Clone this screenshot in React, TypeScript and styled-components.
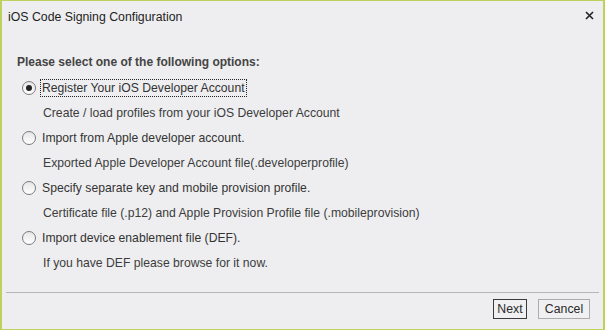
import React, { useState } from 'react';
import styled, { createGlobalStyle } from 'styled-components';

const GlobalStyle = createGlobalStyle`
  body {
    margin: 0;
    font-family: "Liberation Sans", Arial, sans-serif;
  }
`;

const Window = styled.div`
  width: 605px;
  height: 330px;
  box-sizing: border-box;
  border: 1px solid #bcd25c;
  border-width: 1px 2px 1px 2px;
  background: #eeeef0;
  display: flex;
  flex-direction: column;
  color: #333;
  font-size: 12px;
`;

const TitleBar = styled.div`
  height: 31px;
  display: flex;
  align-items: center;
  justify-content: space-between;
  padding: 0 8px 0 6px;
`;

const Title = styled.span`
  color: #1e1e1e;
  font-size: 12.3px;
`;

const CloseButton = styled.button`
  border: none;
  background: none;
  padding: 0;
  width: 12px;
  height: 12px;
  margin-top: -3px;
  display: flex;
  align-items: center;
  justify-content: center;
  cursor: pointer;
`;

const Body = styled.div`
  padding: 22px 0 0 15px;
  flex: 1;
`;

const Heading = styled.div`
  font-weight: bold;
  line-height: 16px;
  color: #444;
  margin-bottom: 5px;
`;

const OptionRow = styled.label`
  height: 25px;
  display: flex;
  align-items: center;
  padding-left: 5px;
  cursor: default;
`;

const Radio = styled.span<{ $checked: boolean }>`
  width: 12px;
  height: 12px;
  border: 1px solid #7a7a7a;
  border-radius: 50%;
  background: linear-gradient(#e6e6e6, #ffffff);
  display: flex;
  align-items: center;
  justify-content: center;
  margin-right: 4px;

  &::after {
    content: '';
    width: 6px;
    height: 6px;
    border-radius: 50%;
    background: ${(p) => (p.$checked ? '#222' : 'transparent')};
  }
`;

const OptionLabel = styled.span<{ $focused: boolean }>`
  padding: 1px 1px;
  line-height: 14px;
  font-size: 12.2px;
  border: 1px dotted ${(p) => (p.$focused ? '#222' : 'transparent')};
`;

const Description = styled.div`
  height: 25px;
  display: flex;
  align-items: center;
  padding-left: 26px;
  font-size: 12.2px;
  color: #3c3c3c;
`;

const Footer = styled.div`
  display: flex;
  flex-direction: column;
`;

const Separator = styled.div`
  height: 1px;
  background: #b6b6b6;
  margin: 0 4px 0 4px;
`;

const ButtonRow = styled.div`
  display: flex;
  justify-content: flex-end;
  gap: 11px;
  padding: 6px 13px 10px 0;
`;

const Button = styled.button<{ $default?: boolean; $width: number }>`
  box-sizing: border-box;
  width: ${(p) => p.$width}px;
  height: 20px;
  padding: 0;
  font-family: "Liberation Sans", Arial, sans-serif;
  font-size: 12.3px;
  color: #2a2a2a;
  background: #f0f0f2;
  border: 1px solid ${(p) => (p.$default ? '#3a3a3a' : '#acacac')};
  border-radius: 0;
  cursor: pointer;
`;

const options = [
  {
    label: 'Register Your iOS Developer Account',
    description: 'Create / load profiles from your iOS Developer Account',
  },
  {
    label: 'Import from Apple developer account.',
    description: 'Exported Apple Developer Account file(.developerprofile)',
  },
  {
    label: 'Specify separate key and mobile provision profile.',
    description: 'Certificate file (.p12) and Apple Provision Profile file (.mobileprovision)',
  },
  {
    label: 'Import device enablement file (DEF).',
    description: 'If you have DEF please browse for it now.',
  },
];

export default function App() {
  const [selected, setSelected] = useState(0);

  return (
    <>
      <GlobalStyle />
      <Window>
        <TitleBar>
          <Title>iOS Code Signing Configuration</Title>
          <CloseButton aria-label="Close">
            <svg width="9" height="9" viewBox="0 0 9 9">
              <path d="M1 1 L8 8 M8 1 L1 8" stroke="#222" strokeWidth="1.6" />
            </svg>
          </CloseButton>
        </TitleBar>
        <Body>
          <Heading>Please select one of the following options:</Heading>
          {options.map((opt, i) => (
            <React.Fragment key={opt.label}>
              <OptionRow onClick={() => setSelected(i)}>
                <Radio $checked={selected === i} />
                <OptionLabel $focused={selected === i}>{opt.label}</OptionLabel>
              </OptionRow>
              <Description>{opt.description}</Description>
            </React.Fragment>
          ))}
        </Body>
        <Footer>
          <Separator />
          <ButtonRow>
            <Button $default $width={34}>Next</Button>
            <Button $width={52}>Cancel</Button>
          </ButtonRow>
        </Footer>
      </Window>
    </>
  );
}
